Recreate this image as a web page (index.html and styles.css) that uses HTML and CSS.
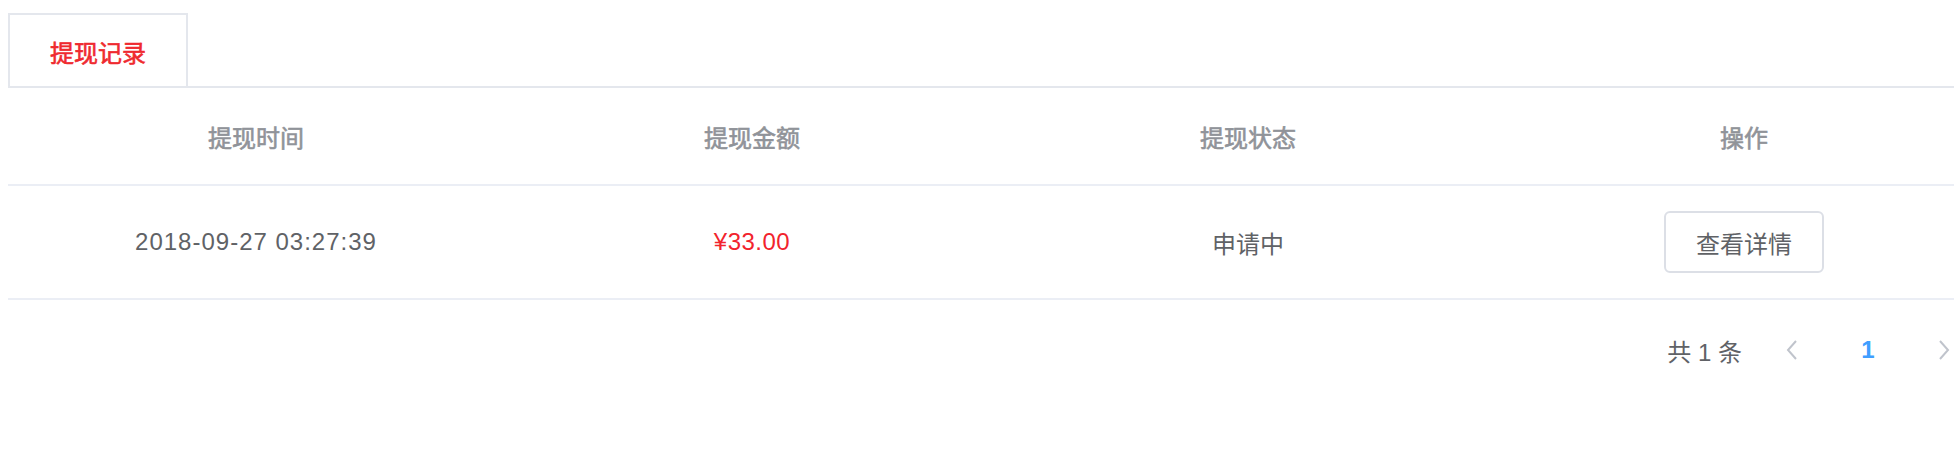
FILE: index.html
```html
<!DOCTYPE html>
<html lang="zh-CN">
<head>
<meta charset="utf-8">
<title>提现记录</title>
<link rel="stylesheet" href="styles.css">
</head>
<body>
<div class="page">
  <div class="tabs">
    <div class="tab active">提现记录</div>
  </div>
  <table class="table">
    <thead>
      <tr>
        <th>提现时间</th>
        <th>提现金额</th>
        <th>提现状态</th>
        <th>操作</th>
      </tr>
    </thead>
    <tbody>
      <tr>
        <td class="date">2018-09-27 03:27:39</td>
        <td class="money">¥33.00</td>
        <td>申请中</td>
        <td><button class="btn">查看详情</button></td>
      </tr>
    </tbody>
  </table>
  <div class="pagination">
    <span class="total">共 1 条</span>
    <span class="pg-btn prev">
      <svg width="14" height="22" viewBox="0 0 14 22"><path d="M11 2 L3 11 L11 20" fill="none" stroke="#c0c4cc" stroke-width="2"/></svg>
    </span>
    <span class="pg-btn pager active">1</span>
    <span class="pg-btn next">
      <svg width="14" height="22" viewBox="0 0 14 22"><path d="M3 2 L11 11 L3 20" fill="none" stroke="#c0c4cc" stroke-width="2"/></svg>
    </span>
  </div>
</div>
</body>
</html>
```

FILE: styles.css
```css
html, body {
  margin: 0;
  padding: 0;
  background: #fff;
  overflow: hidden;
}
body {
  font-family: "Liberation Sans", "Noto Sans CJK SC", sans-serif;
  color: #606266;
}
.page {
  padding: 13px 0 0 8px;
  width: 1984px;
}
.tabs {
  display: flex;
  border-bottom: 2px solid #e4e7ed;
  height: 73px;
}
.tab {
  width: 176px;
  height: 73px;
  border: 2px solid #e4e7ed;
  border-bottom: none;
  display: flex;
  align-items: center;
  justify-content: center;
  font-size: 24px;
  font-weight: 400;
  -webkit-text-stroke: 0.6px currentColor;
  color: #ef2a2f;
}
.table {
  width: 1984px;
  table-layout: fixed;
  border-collapse: collapse;
}
.table th,
.table td {
  text-align: center;
  padding: 0;
  font-size: 24px;
  border-bottom: 2px solid #ebeef5;
}
.table th {
  height: 96px;
  color: #909399;
  font-weight: 400;
  -webkit-text-stroke: 0.6px currentColor;
}
.table td {
  height: 112px;
  color: #606266;
  font-weight: 400;
}
.table td.date {
  letter-spacing: 1px;
}
.table td.money {
  color: #f2232d;
  letter-spacing: 0.5px;
}
.btn {
  width: 160px;
  height: 62px;
  border: 2px solid #dcdfe6;
  border-radius: 6px;
  background: #fff;
  font-family: inherit;
  font-size: 24px;
  color: #606266;
  padding: 0;
}
.pagination {
  display: flex;
  justify-content: flex-end;
  align-items: center;
  height: 60px;
  margin-top: 20px;
  padding-right: 10px;
  font-size: 24px;
}
.total {
  margin-right: 12px;
  color: #606266;
}
.pg-btn {
  width: 76px;
  height: 60px;
  display: flex;
  align-items: center;
  justify-content: center;
}
.pager.active {
  color: #409eff;
  font-weight: 600;
}
```
